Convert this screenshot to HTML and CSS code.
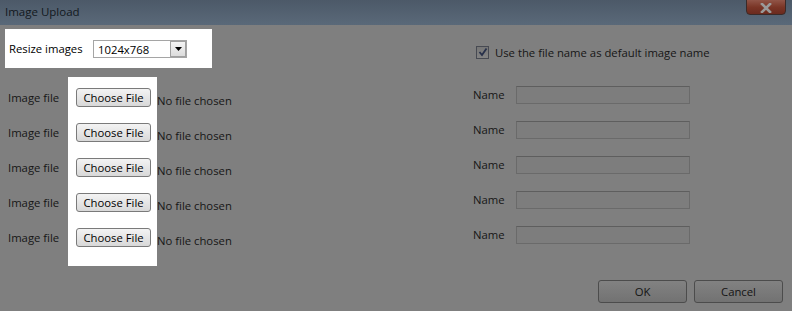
FILE: index.html
```html
<!DOCTYPE html>
<html lang="en">
  <head>
    <meta charset="UTF-8" />
    <title>Image Upload</title>
    <link rel="stylesheet" href="styles.css">
  </head>
  <body>
    <div class="dialog">
      <div class="titlebar">
        <span class="title">Image Upload</span>
        <div class="close-btn">
          <svg width="14" height="10" viewBox="0 0 14 10">
            <path d="M3 1 L11 9 M11 1 L3 9" stroke="#9a9a9a" stroke-width="2.6" stroke-linecap="square" />
          </svg>
        </div>
      </div>

      <div class="top">
        <div class="left-top">
          <div class="resize-box spot">
            <span class="resize-label">Resize images</span>
            <div class="select">
              <span class="select-value">1024x768</span>
              <span class="select-arrow">
                <svg width="7" height="4" viewBox="0 0 7 4"><path d="M0 0 H7 L3.5 4 Z" fill="#000" /></svg>
              </span>
            </div>
          </div>
        </div>
        <label class="check-row">
          <span class="checkbox">
            <svg width="10" height="10" viewBox="0 0 10 10">
              <path d="M1.5 5 L4 8 L8.5 1.5" fill="none" stroke="#27304a" stroke-width="1.8" />
            </svg>
          </span>
          Use the file name as default image name
        </label>
      </div>

      <div class="main">
        <div class="files">
          <div class="col labels">
            <div class="row">Image file</div>
            <div class="row">Image file</div>
            <div class="row">Image file</div>
            <div class="row">Image file</div>
            <div class="row">Image file</div>
          </div>
          <div class="col buttons spot">
            <div class="row"><button class="file-btn">Choose File</button></div>
            <div class="row"><button class="file-btn">Choose File</button></div>
            <div class="row"><button class="file-btn">Choose File</button></div>
            <div class="row"><button class="file-btn">Choose File</button></div>
            <div class="row"><button class="file-btn">Choose File</button></div>
          </div>
          <div class="col status">
            <div class="row">No file chosen</div>
            <div class="row">No file chosen</div>
            <div class="row">No file chosen</div>
            <div class="row">No file chosen</div>
            <div class="row">No file chosen</div>
          </div>
        </div>
        <div class="names">
          <div class="row"><span class="name-label">Name</span><input type="text" class="name-input" /></div>
          <div class="row"><span class="name-label">Name</span><input type="text" class="name-input" /></div>
          <div class="row"><span class="name-label">Name</span><input type="text" class="name-input" /></div>
          <div class="row"><span class="name-label">Name</span><input type="text" class="name-input" /></div>
          <div class="row"><span class="name-label">Name</span><input type="text" class="name-input" /></div>
        </div>
      </div>

      <div class="footer">
        <button class="dlg-btn">OK</button>
        <button class="dlg-btn">Cancel</button>
      </div>
    </div>
  </body>
</html>
```

FILE: styles.css
```css
body {
  margin: 0;
  font-family: "Open Sans", "Noto Sans", sans-serif;
  font-size: 11.3px;
  color: #161616;
  background-color: #7f7f7f;
}
.dialog {
  width: 792px;
  height: 311px;
  background-color: #7f7f7f;
  overflow: hidden;
}
.titlebar {
  height: 25px;
  background: linear-gradient(#4c5968, #5a6979);
  display: flex;
  align-items: center;
  padding-left: 5px;
  position: relative;
}
.title {
  color: #121820;
  font-size: 11.5px;
  margin-top: -3px;
}
.close-btn {
  position: absolute;
  right: 6px;
  top: -2px;
  width: 40px;
  height: 17px;
  border: 1px solid #3b2a28;
  border-radius: 0 0 4px 4px;
  background: linear-gradient(#94594c, #7a3526 55%, #6b2a1e);
  display: flex;
  align-items: center;
  justify-content: center;
  box-sizing: border-box;
  padding-top: 2px;
}

/* white highlighted regions */
.spot {
  background-color: #fff;
  color: #000;
}

.top {
  display: flex;
  height: 43px;
}
.left-top {
  width: 470px;
}
.resize-box {
  margin: 4px 0 0 5px;
  width: 207px;
  height: 39px;
  box-sizing: border-box;
  padding-left: 4px;
  display: flex;
  align-items: center;
}
.resize-label {
  width: 84px;
}
.select {
  width: 94px;
  height: 18px;
  box-sizing: border-box;
  border: 1px solid #a5a5a5;
  display: flex;
  align-items: center;
  margin-top: 1px;
}
.select-value {
  flex: 1;
  padding-left: 4px;
}
.select-arrow {
  width: 16px;
  height: 16px;
  box-sizing: border-box;
  border: 1px solid #a0a0a0;
  background: linear-gradient(#f4f4f4, #dcdcdc);
  display: flex;
  align-items: center;
  justify-content: center;
}
.check-row {
  display: flex;
  align-items: center;
  margin-top: 20px;
  margin-left: 6px;
  height: 14px;
  color: #161616;
}
.checkbox {
  width: 13px;
  height: 13px;
  box-sizing: border-box;
  border: 1px solid #474a52;
  background: linear-gradient(#767676, #838383);
  display: flex;
  align-items: center;
  justify-content: center;
  margin-right: 6px;
}

.main {
  display: flex;
  height: 198px;
}
.files {
  display: flex;
  width: 470px;
}
.col {
  display: flex;
  flex-direction: column;
}
.row {
  height: 35px;
  display: flex;
  align-items: center;
}
.labels {
  width: 68px;
  box-sizing: border-box;
  padding: 12px 0 0 8px;
}
.buttons {
  margin-top: 9px;
  width: 89px;
  box-sizing: border-box;
  padding: 3px 0 11px 8px;
  align-self: flex-start;
}
.status {
  padding-top: 15px;
}
.file-btn {
  width: 75px;
  height: 19px;
  padding: 0;
  font-family: inherit;
  font-size: 11.3px;
  color: #000;
  border: 1px solid #7a7a7a;
  border-radius: 3px;
  background: linear-gradient(#f3f3f3, #e6e6e6 50%, #d8d8d8);
}
.names {
  padding: 9px 0 0 3px;
  display: flex;
  flex-direction: column;
}
.name-label {
  width: 43px;
}
.name-input {
  width: 174px;
  height: 18px;
  box-sizing: border-box;
  margin: 0;
  border: 1px solid #6a6a6a;
  border-top-color: #5e5e5e;
  background-color: #7d7d7d;
}

.footer {
  display: flex;
  justify-content: flex-end;
  gap: 7px;
  padding: 14px 9px 0 0;
}
.dlg-btn {
  width: 89px;
  height: 23px;
  font-family: inherit;
  font-size: 11.3px;
  color: #141414;
  border: 1px solid #4c4c4c;
  border-radius: 3px;
  background: linear-gradient(#828282, #7a7a7a 50%, #727272);
}
```
